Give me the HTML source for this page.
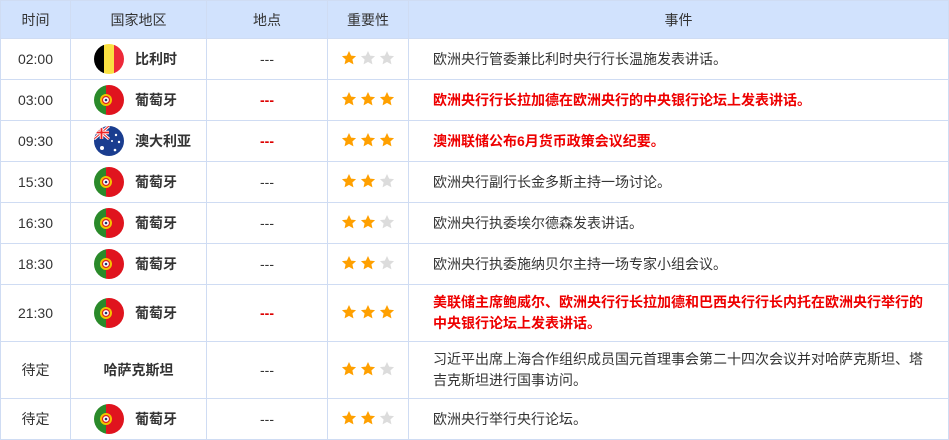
<!DOCTYPE html>
<html><head><meta charset="utf-8"><style>
body{margin:0;background:#fff;font-family:"Liberation Sans","Noto Sans CJK SC",sans-serif;}
table{border-collapse:collapse;position:absolute;left:0;top:0;width:949px;table-layout:fixed;font-size:14px;color:#333;}
td,th{border:1px solid #cfdcf3;padding:0;text-align:center;}
th{background:#d1e2fd;height:37px;font-weight:normal;color:#333;font-size:14px;}
td{height:40px;}
tr.t td{height:56px;}
.c{display:flex;align-items:center;}
.flag{width:30px;height:30px;border-radius:50%;overflow:hidden;margin-left:23px;margin-right:11px;flex:none;position:relative;}
.flag svg{display:block}
.nm{font-weight:bold;}
.ev{text-align:left;padding-left:24px;padding-right:18px;line-height:21px;}
.red{color:#e00;font-weight:bold;}
.dr{color:#d00;font-weight:bold;}
.stars{display:flex;justify-content:center;align-items:center;margin-top:-3px;}
.st{display:block;margin:0 1.5px}
</style></head><body>
<svg width="0" height="0" style="position:absolute"><defs>
<symbol id="s" viewBox="0 0 24 24"><path d="M12 1.5l3.2 6.9 7.4.8-5.5 5 1.6 7.4L12 17.8 5.3 21.6l1.6-7.4-5.5-5 7.4-.8z"/></symbol>
<symbol id="pt" viewBox="0 0 30 30"><rect width="12" height="30" fill="#2a8a2a"/><rect x="12" width="18" height="30" fill="#e0141e"/><circle cx="12" cy="15" r="6" fill="#f4c300"/><circle cx="12" cy="15" r="3.5" fill="#fff" stroke="#d22" stroke-width="1.2"/><circle cx="12" cy="15" r="1.3" fill="#236"/></symbol>
</defs></svg>
<table>
<colgroup><col style="width:70px"><col style="width:136px"><col style="width:121px"><col style="width:81px"><col></colgroup>
<tr><th>时间</th><th>国家地区</th><th>地点</th><th>重要性</th><th>事件</th></tr>
<tr><td>02:00</td><td><div class="c"><div class="flag"><svg width="30" height="30"><rect width="10" height="30" fill="#000"/><rect x="10" width="10" height="30" fill="#fae042"/><rect x="20" width="10" height="30" fill="#ed2939"/></svg></div><span class="nm">比利时</span></div></td><td>---</td><td><span class="stars" data-n="1"></span></td><td class="ev">欧洲央行管委兼比利时央行行长温施发表讲话。</td></tr>
<tr><td>03:00</td><td><div class="c"><div class="flag"><svg width="30" height="30"><use href="#pt"/></svg></div><span class="nm">葡萄牙</span></div></td><td class="dr">---</td><td><span class="stars" data-n="3"></span></td><td class="ev red">欧洲央行行长拉加德在欧洲央行的中央银行论坛上发表讲话。</td></tr>
<tr><td>09:30</td><td><div class="c"><div class="flag"><svg width="30" height="30"><rect width="30" height="30" fill="#1a3d8f"/><path d="M0 0L15 13M15 0L0 13" stroke="#fff" stroke-width="3"/><path d="M0 0L15 13M15 0L0 13" stroke="#e22" stroke-width="1"/><path d="M7.5 0V13M0 6.5H15" stroke="#fff" stroke-width="3.5"/><path d="M7.5 0V13M0 6.5H15" stroke="#e22" stroke-width="1.8"/><circle cx="8" cy="22" r="2" fill="#fff"/><circle cx="22" cy="9" r="1.2" fill="#fff"/><circle cx="25" cy="16" r="1.2" fill="#fff"/><circle cx="21" cy="24" r="1.3" fill="#fff"/><circle cx="18" cy="15" r="1" fill="#fff"/></svg></div><span class="nm">澳大利亚</span></div></td><td class="dr">---</td><td><span class="stars" data-n="3"></span></td><td class="ev red">澳洲联储公布6月货币政策会议纪要。</td></tr>
<tr><td>15:30</td><td><div class="c"><div class="flag"><svg width="30" height="30"><use href="#pt"/></svg></div><span class="nm">葡萄牙</span></div></td><td>---</td><td><span class="stars" data-n="2"></span></td><td class="ev">欧洲央行副行长金多斯主持一场讨论。</td></tr>
<tr><td>16:30</td><td><div class="c"><div class="flag"><svg width="30" height="30"><use href="#pt"/></svg></div><span class="nm">葡萄牙</span></div></td><td>---</td><td><span class="stars" data-n="2"></span></td><td class="ev">欧洲央行执委埃尔德森发表讲话。</td></tr>
<tr><td>18:30</td><td><div class="c"><div class="flag"><svg width="30" height="30"><use href="#pt"/></svg></div><span class="nm">葡萄牙</span></div></td><td>---</td><td><span class="stars" data-n="2"></span></td><td class="ev">欧洲央行执委施纳贝尔主持一场专家小组会议。</td></tr>
<tr class="t"><td>21:30</td><td><div class="c"><div class="flag"><svg width="30" height="30"><use href="#pt"/></svg></div><span class="nm">葡萄牙</span></div></td><td class="dr">---</td><td><span class="stars" data-n="3"></span></td><td class="ev red">美联储主席鲍威尔、欧洲央行行长拉加德和巴西央行行长内托在欧洲央行举行的中央银行论坛上发表讲话。</td></tr>
<tr class="t"><td>待定</td><td><span class="nm">哈萨克斯坦</span></td><td>---</td><td><span class="stars" data-n="2"></span></td><td class="ev">习近平出席上海合作组织成员国元首理事会第二十四次会议并对哈萨克斯坦、塔吉克斯坦进行国事访问。</td></tr>
<tr><td>待定</td><td><div class="c"><div class="flag"><svg width="30" height="30"><use href="#pt"/></svg></div><span class="nm">葡萄牙</span></div></td><td>---</td><td><span class="stars" data-n="2"></span></td><td class="ev">欧洲央行举行央行论坛。</td></tr>
</table>
<script>
document.querySelectorAll('.stars').forEach(function(e){var n=+e.dataset.n,h='';for(var i=0;i<3;i++){h+='<svg class="st" width="16" height="16" style="fill:'+(i<n?'#ffa000':'#dcdcdc')+'"><use href="#s"/></svg>';}e.innerHTML=h;});
</script>
</body></html>
